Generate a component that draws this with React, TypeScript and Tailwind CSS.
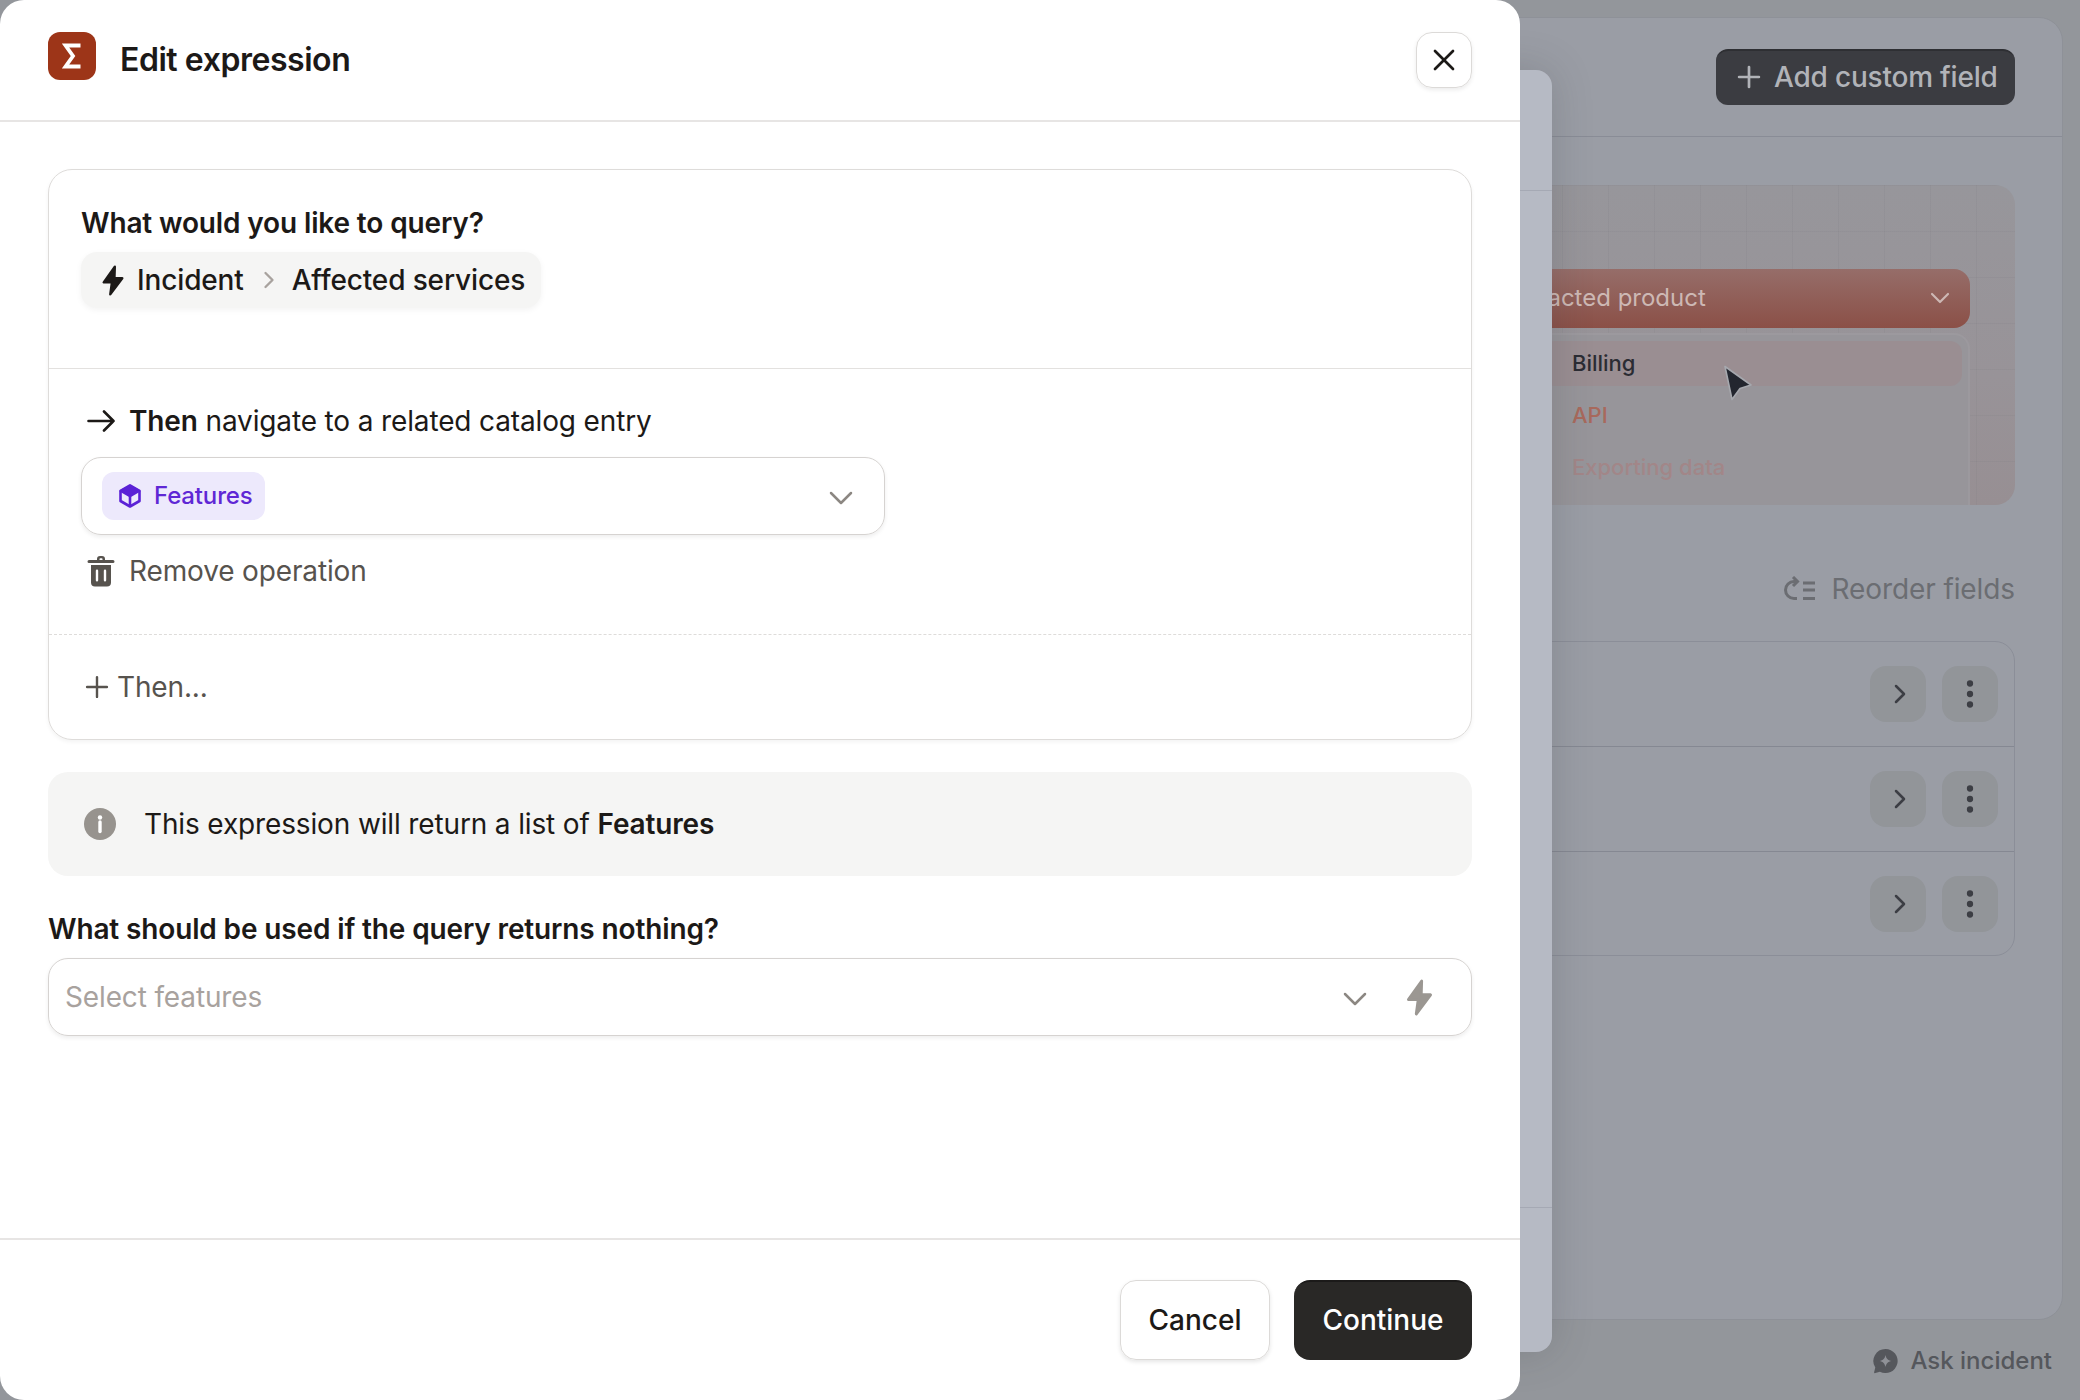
import React from "react";
import { Plus, ChevronDown, ChevronRight, X, EllipsisVertical } from "lucide-react";

const font = { fontFamily: "Inter, 'Liberation Sans', sans-serif" };

function Bolt({ className }: { className?: string }) {
  return (
    <svg viewBox="0 0 24 34" className={className} fill="currentColor" stroke="currentColor" strokeWidth="2.600" strokeLinejoin="round">
      <path d="M14 1.800 1.800 19h9L9 32.200 22.200 14.500h-8.600z" />
    </svg>
  );
}

function Sigma() {
  return (
    <svg viewBox="0 0 20 26" className="h-[26px] w-5" fill="none" stroke="#fff" strokeWidth="3.800">
      <path d="M18.500 2.500H3.500L11 13 3.500 23.500h15" strokeLinejoin="miter" />
    </svg>
  );
}

function Arrow() {
  return (
    <svg viewBox="0 0 28 24" className="h-6 w-7 text-[#1c1917]" fill="none" stroke="currentColor" strokeWidth="2.600" strokeLinecap="round" strokeLinejoin="round">
      <path d="M1.500 12h25M17 2.500l9.500 9.500-9.500 9.500" />
    </svg>
  );
}

function Cube() {
  return (
    <svg viewBox="0 0 24 24" className="h-6 w-6 text-[#5b21d6]">
      <path d="M12 1.500 21.500 7v10L12 22.500 2.500 17V7z" fill="none" stroke="currentColor" strokeWidth="2.600" strokeLinejoin="round" />
      <path d="M12 1.500 21.500 7 12 12.500 2.500 7z" fill="currentColor" stroke="currentColor" strokeWidth="2" strokeLinejoin="round" />
      <path d="M12 12v10" stroke="currentColor" strokeWidth="2.600" />
    </svg>
  );
}

function Trash() {
  return (
    <svg viewBox="0 0 28 32" className="h-8 w-7 shrink-0 text-[#57534e]" fill="currentColor">
      <path d="M10 4a3 3 0 0 1 3-3h2a3 3 0 0 1 3 3v1h8a1.500 1.500 0 0 1 0 3H2a1.500 1.500 0 0 1 0-3h8zm2.500 1h3V4a.8.8 0 0 0-.8-.8h-1.400a.8.8 0 0 0-.8.8z" />
      <path fillRule="evenodd" d="M4 10h20v17.500a4 4 0 0 1-4 4H8a4 4 0 0 1-4-4zm6 4.500a1.200 1.200 0 0 0-1.200 1.200v9.600a1.200 1.200 0 0 0 2.400 0v-9.600A1.200 1.200 0 0 0 10 14.500zm8 0a1.200 1.200 0 0 0-1.200 1.200v9.600a1.200 1.200 0 0 0 2.400 0v-9.600a1.200 1.200 0 0 0-1.200-1.200z" />
    </svg>
  );
}

function Info() {
  return (
    <svg viewBox="0 0 32 32" className="h-8 w-8 shrink-0">
      <circle cx="16" cy="16" r="16" fill="#97938e" />
      <circle cx="16" cy="9.500" r="2.200" fill="#fff" />
      <path d="M16 14v9.500" stroke="#fff" strokeWidth="3.400" strokeLinecap="round" />
    </svg>
  );
}

function Reorder() {
  return (
    <svg viewBox="0 0 32 26" className="h-[26px] w-8 text-[#6b6d72]" fill="none" stroke="currentColor" strokeWidth="3">
      <path d="M12 5.500H10a8 8 0 0 0 0 17h3" />
      <path d="M9 1l4.500 4.500L9 10" />
      <path d="M19 7h12M19 14h12M19 22.500h12" />
    </svg>
  );
}

function Ask() {
  return (
    <svg viewBox="0 0 28 28" className="h-[26px] w-[27px] text-[#55575c]">
      <path d="M14 1a13 13 0 1 1-6 24.500L3 27a1 1 0 0 1-1.200-1.200L3 21A13 13 0 0 1 14 1z" fill="currentColor" />
      <path d="M14 7.500c.8 4 2.400 5.600 6.500 6.500-4.100.9-5.700 2.500-6.500 6.500-.8-4-2.400-5.600-6.500-6.500 4.100-.9 5.700-2.500 6.500-6.500z" fill="#8f9197" />
    </svg>
  );
}

function Cursor() {
  return (
    <svg viewBox="0 0 30 36" className="h-[36px] w-[30px]">
      <path d="M2 1.500 28 20l-11 3.500L9 34.500z" fill="#23262f" stroke="#a6a8ae" strokeWidth="1.600" strokeLinejoin="round" />
    </svg>
  );
}

function FieldRow({ last }: { last?: boolean }) {
  return (
    <div className={`flex items-center justify-end gap-4 pr-4 ${last ? "h-[103px]" : "h-[105px] border-b border-[#858892]"}`}>
      <div className="flex h-14 w-14 items-center justify-center rounded-2xl bg-[#929599]">
        <ChevronRight className="ml-[3px] h-8 w-8 text-[#3c3e44]" strokeWidth={1.9} />
      </div>
      <div className="flex h-14 w-14 items-center justify-center rounded-2xl bg-[#929599]">
        <EllipsisVertical className="h-9 w-9 text-[#3c3e44]" strokeWidth={2.2} />
      </div>
    </div>
  );
}

function Background() {
  return (
    <div className="flex h-[1400px] w-[2080px] flex-col bg-[#93969b] pl-[1000px] pr-[17px] pt-[17px]">
      <div className="flex h-[1303px] flex-col rounded-[24px] border border-[#8e9198] bg-[#9a9da5]">
        <div className="flex h-[119px] shrink-0 items-center justify-end border-b border-[#898c96] pr-[47px]">
          <div className="flex h-14 w-[299px] items-center gap-2 rounded-xl border-t-2 border-[#2e2f33] bg-[#3b3c41] pb-[2px] pl-4 text-[28px] font-medium tracking-[-0.2px] text-[#b1b3b8]">
            <Plus className="h-[34px] w-[34px]" strokeWidth={1.9} />
            <span>Add custom field</span>
          </div>
        </div>
        <div className="flex flex-col pl-[101px] pr-[47px] pt-[48px]">
          <div className="relative h-[320px] overflow-hidden rounded-[20px] bg-[linear-gradient(rgba(70,70,80,0.05)_1px,transparent_1px),linear-gradient(90deg,rgba(70,70,80,0.05)_1px,transparent_1px),linear-gradient(180deg,#97969b_0%,#989398_60%,#978f93_100%)] bg-[size:46px_46px,46px_46px,100%_100%] pr-[45px] pt-[84px]">
            <div className="flex h-[59px] items-center justify-between rounded-2xl bg-[linear-gradient(180deg,#966d69,#8b5047)] pb-[2px] pl-[403px] pr-[14px] text-[#cdb8b4]">
              <span className="whitespace-nowrap text-[24px] leading-none">Impacted product</span>
              <ChevronDown className="h-8 w-8" strokeWidth={1.6} />
            </div>
            <div className="ml-[433px] mt-[5px] flex h-[200px] flex-col rounded-t-2xl border-2 border-b-0 border-[#9c999e] bg-[#97959a] p-[6px] text-[22px] font-medium">
              <div className="flex h-[45px] shrink-0 items-center rounded-xl bg-[#9a8e92] pl-[29px] text-[#2b2c33]">
                <span>Billing</span>
              </div>
              <div className="mt-[3px] flex h-[52px] shrink-0 items-center pl-[29px] text-[#a8695c]">API</div>
              <div className="flex h-[52px] shrink-0 items-center pl-[29px] text-[#a28688]">Exporting data</div>
            </div>
            <div className="absolute left-[621px] top-[180px]">
              <Cursor />
            </div>
          </div>
          <div className="flex h-[136px] items-center justify-end gap-4 pt-[32px] text-[28px] tracking-[-0.1px] text-[#6b6d72]">
            <Reorder />
            <span>Reorder fields</span>
          </div>
          <div className="flex flex-col rounded-[20px] border border-[#8b8e98]">
            <FieldRow />
            <FieldRow />
            <FieldRow last />
          </div>
        </div>
      </div>
      <div className="flex h-[80px] items-center justify-end gap-[11px] pr-[11px] pt-[2px] text-[24px] font-medium text-[#55575c]">
        <Ask />
        <span>Ask incident</span>
      </div>
    </div>
  );
}

function Drawer() {
  return (
    <div className="absolute left-[1400px] top-[70px] flex h-[1282px] w-[152px] flex-col rounded-r-2xl bg-[#b6bac4] shadow-[0_0_40px_rgba(60,62,70,0.22)]">
      <div className="h-[121px] border-b border-[#a5a9b4]" />
      <div className="flex-1" />
      <div className="h-[145px] border-t border-[#a5a9b4]" />
    </div>
  );
}

function Modal() {
  return (
    <div className="absolute left-0 top-0 flex h-[1400px] w-[1520px] flex-col rounded-[24px] bg-white text-[28px] tracking-[-0.14px] text-[#1c1917]">
      <div className="flex h-[122px] shrink-0 items-center justify-between border-b-2 border-[#e7e5e4] px-12">
        <div className="flex items-center gap-6">
          <div className="mb-2 flex h-12 w-12 items-center justify-center rounded-xl bg-[#9d3518]">
            <Sigma />
          </div>
          <h1 className="text-[32px] font-semibold tracking-[-0.45px]">Edit expression</h1>
        </div>
        <button className="flex h-14 w-14 items-center justify-center rounded-2xl border border-[#dcdad8] shadow-[0_2px_4px_rgba(0,0,0,0.08)]">
          <X className="h-9 w-9 text-[#1c1917]" strokeWidth={1.8} />
        </button>
      </div>

      <div className="flex flex-1 flex-col px-12 pt-[47px]">
        <div className="flex h-[571px] flex-col rounded-[24px] border border-[#dedcda] shadow-[0_2px_4px_rgba(0,0,0,0.05)]">
          <div className="flex h-[199px] shrink-0 flex-col items-start border-b border-[#e3e1df] px-8 pt-[33px]">
            <div className="h-10 font-semibold leading-10">What would you like to query?</div>
            <div className="mt-[9px] flex h-14 items-center rounded-2xl bg-[#f5f5f4] pl-[21px] pr-4 shadow-[0_2px_6px_rgba(0,0,0,0.05)]">
              <Bolt className="h-[31px] w-[22px] text-[#1c1917]" />
              <span className="ml-[13px] font-medium">Incident</span>
              <ChevronRight className="ml-[11px] mr-[9px] h-7 w-7 text-[#a8a29e]" strokeWidth={2} />
              <span className="font-medium">Affected services</span>
            </div>
          </div>
          <div className="flex h-[266px] shrink-0 flex-col items-start border-b border-dashed border-[#dedcda] px-8 pt-8">
            <div className="flex h-10 items-center gap-[14px] pl-[6px]">
              <Arrow />
              <span>
                <b className="font-semibold">Then</b> navigate to a related catalog entry
              </span>
            </div>
            <div className="mt-4 flex h-[78px] w-[804px] items-center justify-between rounded-[20px] border border-[#d6d3d1] pl-5 pr-[23px] shadow-[0_2px_4px_rgba(0,0,0,0.07)]">
              <div className="flex h-12 items-center gap-3 rounded-xl bg-[#ede9fc] pl-[16px] pr-3 text-[24px] font-medium text-[#5f27d5]">
                <Cube />
                <span>Features</span>
              </div>
              <ChevronDown className="mt-1 h-10 w-10 text-[#8c8782]" strokeWidth={1.5} />
            </div>
            <div className="mt-4 flex h-10 items-center gap-[14px] pl-[6px] text-[#57534e]">
              <Trash />
              <span>Remove operation</span>
            </div>
          </div>
          <div className="flex flex-1 items-center gap-[3px] pl-[31px] text-[#57534e]">
            <Plus className="h-[34px] w-[34px]" strokeWidth={1.7} />
            <span>Then...</span>
          </div>
        </div>

        <div className="mt-8 flex h-[104px] items-center gap-7 rounded-[20px] bg-[#f5f5f4] pl-9">
          <Info />
          <span>
            This expression will return a list of <b className="font-semibold">Features</b>
          </span>
        </div>

        <div className="mt-[33px] h-10 font-semibold leading-10">What should be used if the query returns nothing?</div>
        <div className="mt-[9px] flex h-[78px] items-center justify-between rounded-[20px] border border-[#d6d3d1] pl-4 pr-[38px] shadow-[0_2px_4px_rgba(0,0,0,0.07)]">
          <span className="text-[#a8a29e]">Select features</span>
          <div className="flex items-center gap-[31px]">
            <ChevronDown className="mt-[3px] h-10 w-10 text-[#8c8782]" strokeWidth={1.5} />
            <Bolt className="h-[37px] w-[27px] text-[#9b9792]" />
          </div>
        </div>
      </div>

      <div className="flex h-[162px] shrink-0 items-start justify-end gap-6 border-t-2 border-[#e7e5e4] px-12 pt-10 font-medium tracking-normal">
        <button className="flex h-20 w-[150px] items-center justify-center rounded-2xl border border-[#dcdad8] text-[28px] shadow-[0_2px_4px_rgba(0,0,0,0.1)]">
          Cancel
        </button>
        <button className="flex h-20 w-[178px] items-center justify-center rounded-2xl border-t-2 border-[#1b1a19] bg-[#292826] pb-[2px] text-[28px] text-white">
          Continue
        </button>
      </div>
    </div>
  );
}

export default function App() {
  return (
    <div className="relative h-[1400px] w-[2080px] overflow-hidden" style={font}>
      <Background />
      <Drawer />
      <Modal />
    </div>
  );
}
